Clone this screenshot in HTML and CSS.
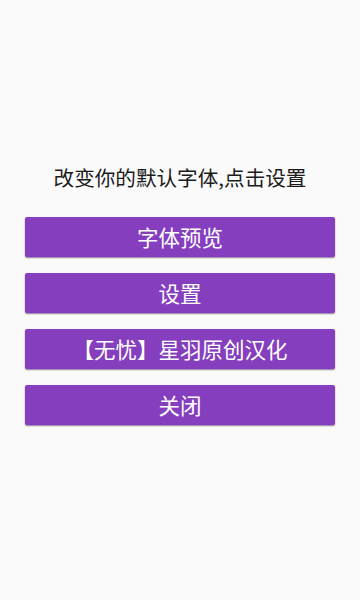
FILE: index.html
```html
<!DOCTYPE html>
<html lang="zh-CN">
<head>
<meta charset="utf-8">
<link rel="stylesheet" href="styles.css">
</head>
<body>
<main class="screen">
  <p class="title">改变你的默认字体,点击设置</p>
  <div class="actions">
    <button class="btn">字体预览</button>
    <button class="btn">设置</button>
    <button class="btn">【无忧】星羽原创汉化</button>
    <button class="btn">关闭</button>
  </div>
</main>
</body>
</html>
```
FILE: styles.css
```css
html, body {
  margin: 0;
  padding: 0;
  background: #fafafa;
}
body {
  font-family: "Noto Sans CJK SC", "Noto Sans", sans-serif;
}
.screen {
  height: 600px;
  box-sizing: border-box;
  display: flex;
  flex-direction: column;
  justify-content: center;
  align-items: stretch;
  padding: 0 25px 12px;
}
.title {
  margin: 0 0 26px;
  text-align: center;
  font-size: 20.6px;
  line-height: 28px;
  color: #1c1c1c;
}
.actions {
  display: flex;
  flex-direction: column;
  gap: 16px;
}
.btn {
  display: block;
  width: 100%;
  height: 40px;
  border: none;
  border-radius: 2px;
  background: #853fbe;
  color: #ffffff;
  font-family: "Noto Sans CJK SC", "Noto Sans", sans-serif;
  font-size: 21.5px;
  line-height: 38px;
  padding: 0;
  box-shadow: 0 1px 1.5px rgba(60, 20, 90, 0.55);
}
```
